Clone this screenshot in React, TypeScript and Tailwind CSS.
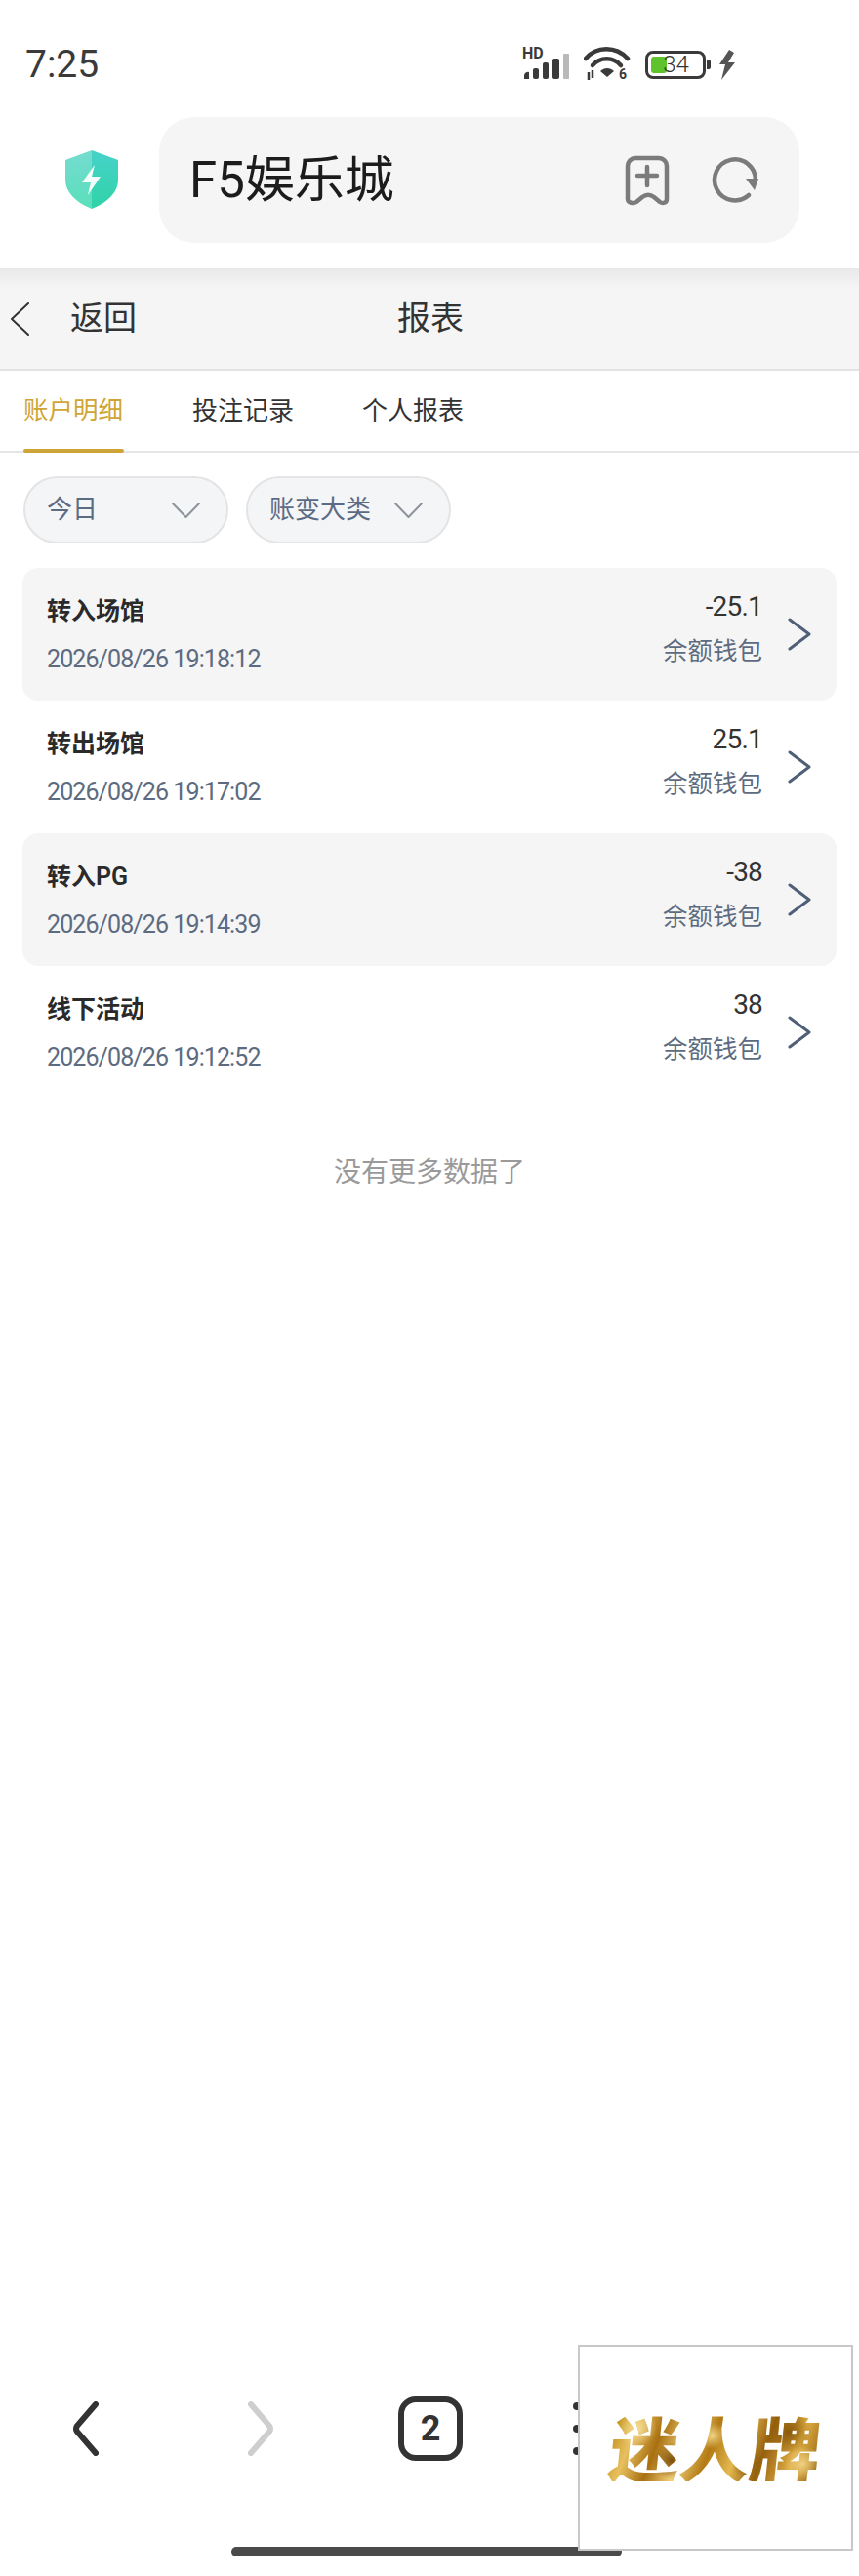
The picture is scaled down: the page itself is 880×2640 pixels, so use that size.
const cjk = "font-['Roboto','Noto_Sans_CJK_SC',sans-serif]";

const records = [
  { title: '转入场馆', time: '2026/08/26 19:18:12', amount: '-25.1', shaded: true },
  { title: '转出场馆', time: '2026/08/26 19:17:02', amount: '25.1', shaded: false },
  { title: '转入PG', time: '2026/08/26 19:14:39', amount: '-38', shaded: true },
  { title: '线下活动', time: '2026/08/26 19:12:52', amount: '38', shaded: false },
];

function StatusIcons() {
  return (
    <div className="ml-auto mr-[126px] flex items-center">
      <svg width="52" height="40" viewBox="0 -4 52 40" className="mt-[-6px]">
        <text x="0" y="13" fontSize="16" fontWeight="700" fill="#3a3a3a" fontFamily="Roboto, sans-serif">HD</text>
        <path d="M2 34v-4a4 4 0 0 1 5-3v7z" fill="#3a3a3a" />
        <rect x="11" y="23" width="6" height="11" rx="2" fill="#3a3a3a" />
        <rect x="21" y="17" width="6" height="17" rx="2" fill="#3a3a3a" />
        <rect x="31" y="13" width="7" height="21" rx="2" fill="#3a3a3a" />
        <rect x="42" y="8" width="6" height="26" rx="1" fill="#b9b9b9" />
      </svg>
      <svg width="48" height="38" viewBox="0 0 48 38" className="ml-[11px]">
        <path d="M2 13C13 0 33 0 45 13" fill="none" stroke="#3a3a3a" strokeWidth="4.5" strokeLinecap="round" />
        <path d="M9 20C17 11 30 11 38 20" fill="none" stroke="#3a3a3a" strokeWidth="4.5" strokeLinecap="round" />
        <path d="M17 26c4-4 10-4 14 0l-7 6z" fill="#3a3a3a" />
        <path d="M5 27v8M9 25v8" stroke="#3a3a3a" strokeWidth="2.5" />
        <text x="36" y="34" fontSize="14" fontWeight="700" fill="#3a3a3a" fontFamily="Roboto, sans-serif">6</text>
      </svg>
      <div className="relative ml-[15px] flex h-[29px] w-[62px] items-center justify-center rounded-[8px] border-[3px] border-[#3a3a3a]">
        <div className="absolute left-[3px] top-[3px] h-[17px] w-[16px] rounded-[3px] bg-[#5fc32e]" />
        <span className="relative ml-[1px] text-[24px] font-light leading-none text-[#333]">34</span>
      </div>
      <div className="ml-[1px] h-[10px] w-[4px] rounded-r-[2px] bg-[#3a3a3a]" />
      <svg width="18" height="31" viewBox="0 0 18 31" className="ml-[8px]">
        <path d="M11 0 1 15h6L3 31l14-18h-7l6-10z" fill="#555" />
      </svg>
    </div>
  );
}

function Shield() {
  return (
    <svg width="54" height="60" viewBox="0 0 54 60">
      <defs>
        <linearGradient id="shieldL" x1="0" y1="0" x2="0" y2="1">
          <stop offset="0" stopColor="#74dccf" />
          <stop offset="1" stopColor="#5adfbb" />
        </linearGradient>
        <linearGradient id="shieldR" x1="0" y1="0" x2="0" y2="1">
          <stop offset="0" stopColor="#47d2c9" />
          <stop offset="1" stopColor="#2fd3a7" />
        </linearGradient>
      </defs>
      <path d="M27 0 0 10v20c0 14 12 24 27 30z" fill="url(#shieldL)" />
      <path d="M27 0l27 10v20c0 14-12 24-27 30z" fill="url(#shieldR)" />
      <path d="M30 15 17 33h9l-3 13 13-19h-9z" fill="#f4fffc" />
    </svg>
  );
}

function Chevron({ dir, className, color, width, w, h }: { dir: 'l' | 'r' | 'd'; className?: string; color: string; width: number; w: number; h: number }) {
  const d =
    dir === 'l'
      ? `M${w - 1} 1 L1 ${h / 2} L${w - 1} ${h - 1}`
      : dir === 'r'
        ? `M2 2 L${w - 2} ${h / 2} L2 ${h - 2}`
        : `M1 1 L${w / 2} ${h - 1} L${w - 1} 1`;
  return (
    <svg width={w} height={h} viewBox={`0 0 ${w} ${h}`} className={className}>
      <path d={d} fill="none" stroke={color} strokeWidth={width} strokeLinecap="round" strokeLinejoin="round" />
    </svg>
  );
}

function Filter({ label }: { label: string }) {
  return (
    <div className="flex h-[69px] w-[210px] items-center rounded-full border-2 border-[#e4e4e6] bg-[#f4f5f7] pl-[22px]">
      <span className="text-[26px] text-[#5c6b84]">{label}</span>
      <Chevron dir="d" color="#8f949c" width={2} w={29} h={16} className="ml-auto mr-[27px]" />
    </div>
  );
}

export default function App() {
  return (
    <div className={`relative flex h-[2640px] w-[880px] flex-col overflow-hidden bg-white ${cjk}`}>
      <div className="flex h-[120px] items-center pt-[12px]">
        <span className="ml-[26px] text-[39px] leading-none text-[#3a3a3a]">7:25</span>
        <StatusIcons />
      </div>

      <div className="flex h-[155px] items-start">
        <div className="ml-[67px] mt-[34px]">
          <Shield />
        </div>
        <div className="ml-[42px] flex h-[129px] w-[656px] items-center rounded-[36px] bg-[#f5f5f5] pl-[31px]">
          <span className="text-[51px] leading-none text-[#1c1c1c]">F5娱乐城</span>
          <svg width="46" height="52" viewBox="0 0 46 52" className="ml-auto">
            <path d="M3 11a8 8 0 0 1 8-8h24a8 8 0 0 1 8 8v34c0 4-4 5-7 3l-6-5c-4-3-8-3-12 0l-6 5c-3 2-9 1-9-3z" fill="none" stroke="#7b7b7b" strokeWidth="4.5" strokeLinejoin="round" />
            <path d="M23 12v19M13 21h20" stroke="#7b7b7b" strokeWidth="4.5" strokeLinecap="round" />
          </svg>
          <svg width="50" height="50" viewBox="0 0 50 50" className="ml-[42px] mr-[41px]">
            <path d="M39 40A21 21 0 1 1 46 25" fill="none" stroke="#7b7b7b" strokeWidth="4.5" strokeLinecap="round" />
            <path d="M36 23h13l-4 12z" fill="#7b7b7b" />
          </svg>
        </div>
      </div>

      <div className="flex h-[105px] items-start border-b-2 border-[#e3e3e3] bg-gradient-to-b from-[#e9e9e9] from-0% to-[#f5f5f5] to-20%">
        <Chevron dir="l" color="#333" width={2} w={19} h={34} className="ml-[11px] mt-[35px]" />
        <span className="ml-[42px] mt-[34px] text-[34px] leading-none text-[#333]">返回</span>
        <span className="ml-[267px] mt-[34px] text-[34px] leading-none text-[#333]">报表</span>
      </div>

      <div className="flex h-[84px] border-b-2 border-[#e5e5e5] pl-[24px]">
        <div className="relative h-[84px] w-[103px] whitespace-nowrap pt-[28px] text-[25.5px] leading-none text-[#d0a534]">
          账户明细
          <div className="absolute bottom-0 left-0 h-[4px] w-[103px] rounded-full bg-[#cfa436]" />
        </div>
        <span className="ml-[70px] pt-[28px] text-[26px] leading-none text-[#333]">投注记录</span>
        <span className="ml-[70px] pt-[28px] text-[26px] leading-none text-[#333]">个人报表</span>
      </div>

      <div className="flex gap-[18px] pl-[24px] pt-[24px]">
        <Filter label="今日" />
        <Filter label="账变大类" />
      </div>

      <div className="mx-[23px] mt-[25px] flex flex-col">
        {records.map((r) => (
          <div key={r.time} className={`flex h-[136px] items-center rounded-[16px] pl-[25px] ${r.shaded ? 'bg-[#f5f5f5]' : 'bg-white'}`}>
            <div className="flex flex-col pt-[2px]">
              <span className="text-[25px] font-semibold leading-[30px] text-[#2a2a2a]">{r.title}</span>
              <span className="mt-[19px] text-[25px] leading-[30px] tracking-[-0.9px] text-[#5d6b80]">{r.time}</span>
            </div>
            <div className="mb-[11px] ml-auto flex flex-col items-end">
              <span className="text-[28px] leading-[30px] tracking-[-0.8px] text-[#333]">{r.amount}</span>
              <span className="mt-[15px] text-[25.5px] leading-[30px] text-[#5d6b80]">余额钱包</span>
            </div>
            <Chevron dir="r" color="#4f5f78" width={3} w={24} h={34} className="ml-[26px] mr-[26px]" />
          </div>
        ))}
      </div>

      <div className="mt-[60px] text-center text-[28px] leading-[32px] text-[#9a9a9a]">没有更多数据了</div>

      <div className="mt-auto flex flex-col items-start pb-[20px]">
        <div className="flex h-[66px] items-center">
          <svg width="26" height="56" viewBox="0 0 26 56" className="ml-[75px]">
            <path d="M23 3 4 25q-2 3 0 6l19 22" fill="none" stroke="#333" strokeWidth="6" strokeLinecap="round" />
          </svg>
          <svg width="26" height="56" viewBox="0 0 26 56" className="ml-[153px]">
            <path d="M3 3l19 22q2 3 0 6L3 53" fill="none" stroke="#cecece" strokeWidth="6" strokeLinecap="round" />
          </svg>
          <div className="ml-[128px] flex h-[66px] w-[66px] items-center justify-center rounded-[18px] border-[6px] border-[#333] text-[36px] font-bold leading-none text-[#333]">
            2
          </div>
          <div className="ml-[113px] flex flex-col gap-[15px]">
            <div className="h-[8px] w-[8px] rounded-full bg-[#333]" />
            <div className="h-[8px] w-[8px] rounded-full bg-[#333]" />
            <div className="h-[8px] w-[8px] rounded-full bg-[#333]" />
          </div>
        </div>
        <div className="ml-[237px] mt-[88px] h-[10px] w-[400px] rounded-full bg-[#4a4a4a]" />
      </div>

      <div className="absolute bottom-[26px] right-[6px] flex h-[211px] w-[282px] items-center justify-center border-2 border-[#c8c8c8] bg-white pb-[4px]">
        <span className="-skew-x-6 bg-[radial-gradient(circle_at_12%_25%,#f3dc95_0,transparent_10%),radial-gradient(circle_at_30%_70%,#7d4f08_0,transparent_12%),radial-gradient(circle_at_48%_35%,#f1d586_0,transparent_11%),radial-gradient(circle_at_66%_75%,#8a5a0b_0,transparent_10%),radial-gradient(circle_at_84%_30%,#8a5a0b_0,transparent_12%),radial-gradient(circle_at_92%_75%,#f0d080_0,transparent_9%),linear-gradient(105deg,#b8860b_0%,#e8c060_12%,#a86f10_24%,#f0cf7a_36%,#b27a12_48%,#e4b850_60%,#96600c_72%,#dfae45_86%,#8f5c0c_100%)] bg-clip-text font-['Noto_Sans_CJK_SC',sans-serif] text-[72px] font-black leading-none text-transparent">
          迷人牌
        </span>
      </div>
    </div>
  );
}
